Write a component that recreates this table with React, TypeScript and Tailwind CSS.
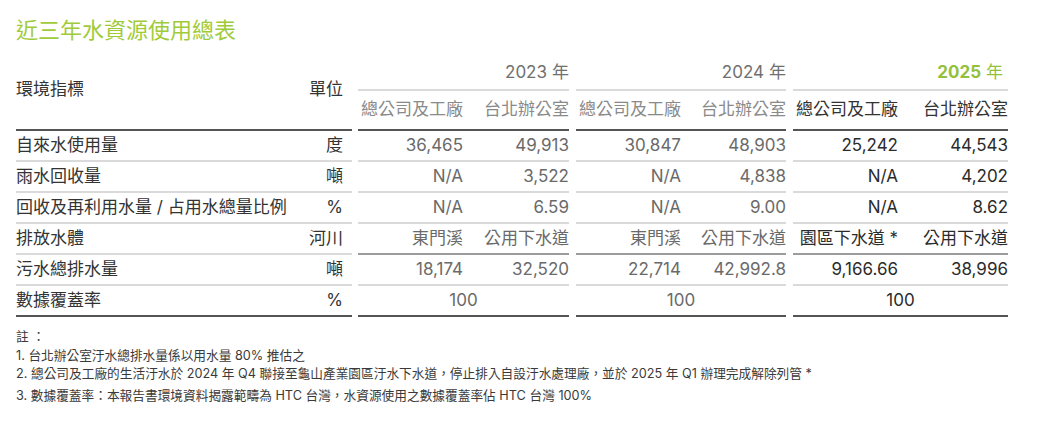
import React from 'react'

const FONT = "font-['Inter','Noto_Sans_CJK_TC',sans-serif]"

// three year groups, each split into two sub columns
const groupBox = ['ml-[6px] w-[211px]', 'ml-[7px] w-[210px]', 'ml-[7px] w-[215px]']
const subBox = [
  ['w-[105px]', 'w-[106px]'],
  ['w-[105px]', 'w-[105px]'],
  ['w-[105px]', 'w-[110px]'],
]
const years = ['2023', '2024', '2025']

type RowData = {
  label: string
  unit: string
  values?: string[]
  merged?: string
  midLine?: boolean
  last?: boolean
}

const rows: RowData[] = [
  { label: '自來水使用量', unit: '度', values: ['36,465', '49,913', '30,847', '48,903', '25,242', '44,543'] },
  { label: '雨水回收量', unit: '噸', values: ['N/A', '3,522', 'N/A', '4,838', 'N/A', '4,202'] },
  { label: '回收及再利用水量 / 占用水總量比例', unit: '%', values: ['N/A', '6.59', 'N/A', '9.00', 'N/A', '8.62'] },
  { label: '排放水體', unit: '河川', values: ['東門溪', '公用下水道', '東門溪', '公用下水道', '園區下水道 *', '公用下水道'], midLine: true },
  { label: '污水總排水量', unit: '噸', values: ['18,174', '32,520', '22,714', '42,992.8', '9,166.66', '38,996'] },
  { label: '數據覆蓋率', unit: '%', merged: '100', last: true },
]

const Row = ({ row }: { row: RowData }) => {
  const leftLine = row.last ? 'border-[#555]' : 'border-[#dadada]'
  const dataLine = row.last ? 'border-[#555]' : row.midLine ? 'border-[#9c9c9c]' : 'border-[#dadada]'
  return (
    <div className="flex h-[31px]">
      <div className={`flex w-[336px] items-center justify-between border-b-2 pr-[9px] text-[#333] ${leftLine}`}>
        <span>{row.label}</span>
        <span>{row.unit}</span>
      </div>
      {groupBox.map((g, gi) => {
        const tone = gi === 2 ? 'text-[#2b2b2b]' : 'text-[#6a6a6a]'
        return (
          <div key={gi} className={`flex border-b-2 ${g} ${dataLine} ${tone}`}>
            {row.merged ? (
              <div className="flex w-full items-center justify-center">{row.merged}</div>
            ) : (
              subBox[gi].map((s, si) => (
                <div key={si} className={`flex items-center justify-end whitespace-nowrap ${s}`}>
                  {row.values![gi * 2 + si]}
                </div>
              ))
            )}
          </div>
        )
      })}
    </div>
  )
}

export default function App() {
  return (
    <div className={`h-[422px] w-[1048px] bg-white px-4 pt-[15px] text-[17px] ${FONT}`}>
      <h1 className="text-[22px] leading-[31px] text-[#9fcb3a]">近三年水資源使用總表</h1>

      {/* table */}
      <div className="mt-[9px] w-[992px]">
        {/* header */}
        <div className="flex">
          <div className="flex h-[76px] w-[336px] items-center justify-between border-b-2 border-[#555] pr-[9px] pb-1 text-[#333]">
            <span>環境指標</span>
            <span>單位</span>
          </div>
          {groupBox.map((g, gi) => (
            <div key={gi} className={`flex flex-col ${g}`}>
              <div
                className={`flex h-[36px] items-center justify-end border-b-2 border-[#dadada] pt-[1px] ${
                  gi === 2 ? 'pr-[5px] font-bold text-[#93c13a]' : 'text-[#707070]'
                }`}
              >
                {years[gi]}
                <span className="ml-[5px] font-normal">年</span>
              </div>
              <div className={`flex h-[40px] border-b-2 border-[#555] ${gi === 2 ? 'text-[#333]' : 'text-[#8a8a8a]'}`}>
                {subBox[gi].map((s, si) => (
                  <div key={si} className={`flex items-center justify-end whitespace-nowrap ${s}`}>
                    {si === 0 ? '總公司及工廠' : '台北辦公室'}
                  </div>
                ))}
              </div>
            </div>
          ))}
        </div>

        {rows.map((r) => (
          <Row key={r.label} row={r} />
        ))}
      </div>

      {/* notes */}
      <div className="mt-[11px] text-[12.7px] leading-[18px] text-[#3a3a3a]">
        <p>註 ：</p>
        <p className="mt-[1px]">1. 台北辦公室汙水總排水量係以用水量 80% 推估之</p>
        <p>2. 總公司及工廠的生活汙水於 2024 年 Q4 聯接至龜山產業園區汙水下水道，停止排入自設汙水處理廠，並於 2025 年 Q1 辦理完成解除列管 *</p>
        <p className="mt-[4px]">3. 數據覆蓋率：本報告書環境資料揭露範疇為 HTC 台灣，水資源使用之數據覆蓋率佔 HTC 台灣 100%</p>
      </div>
    </div>
  )
}
